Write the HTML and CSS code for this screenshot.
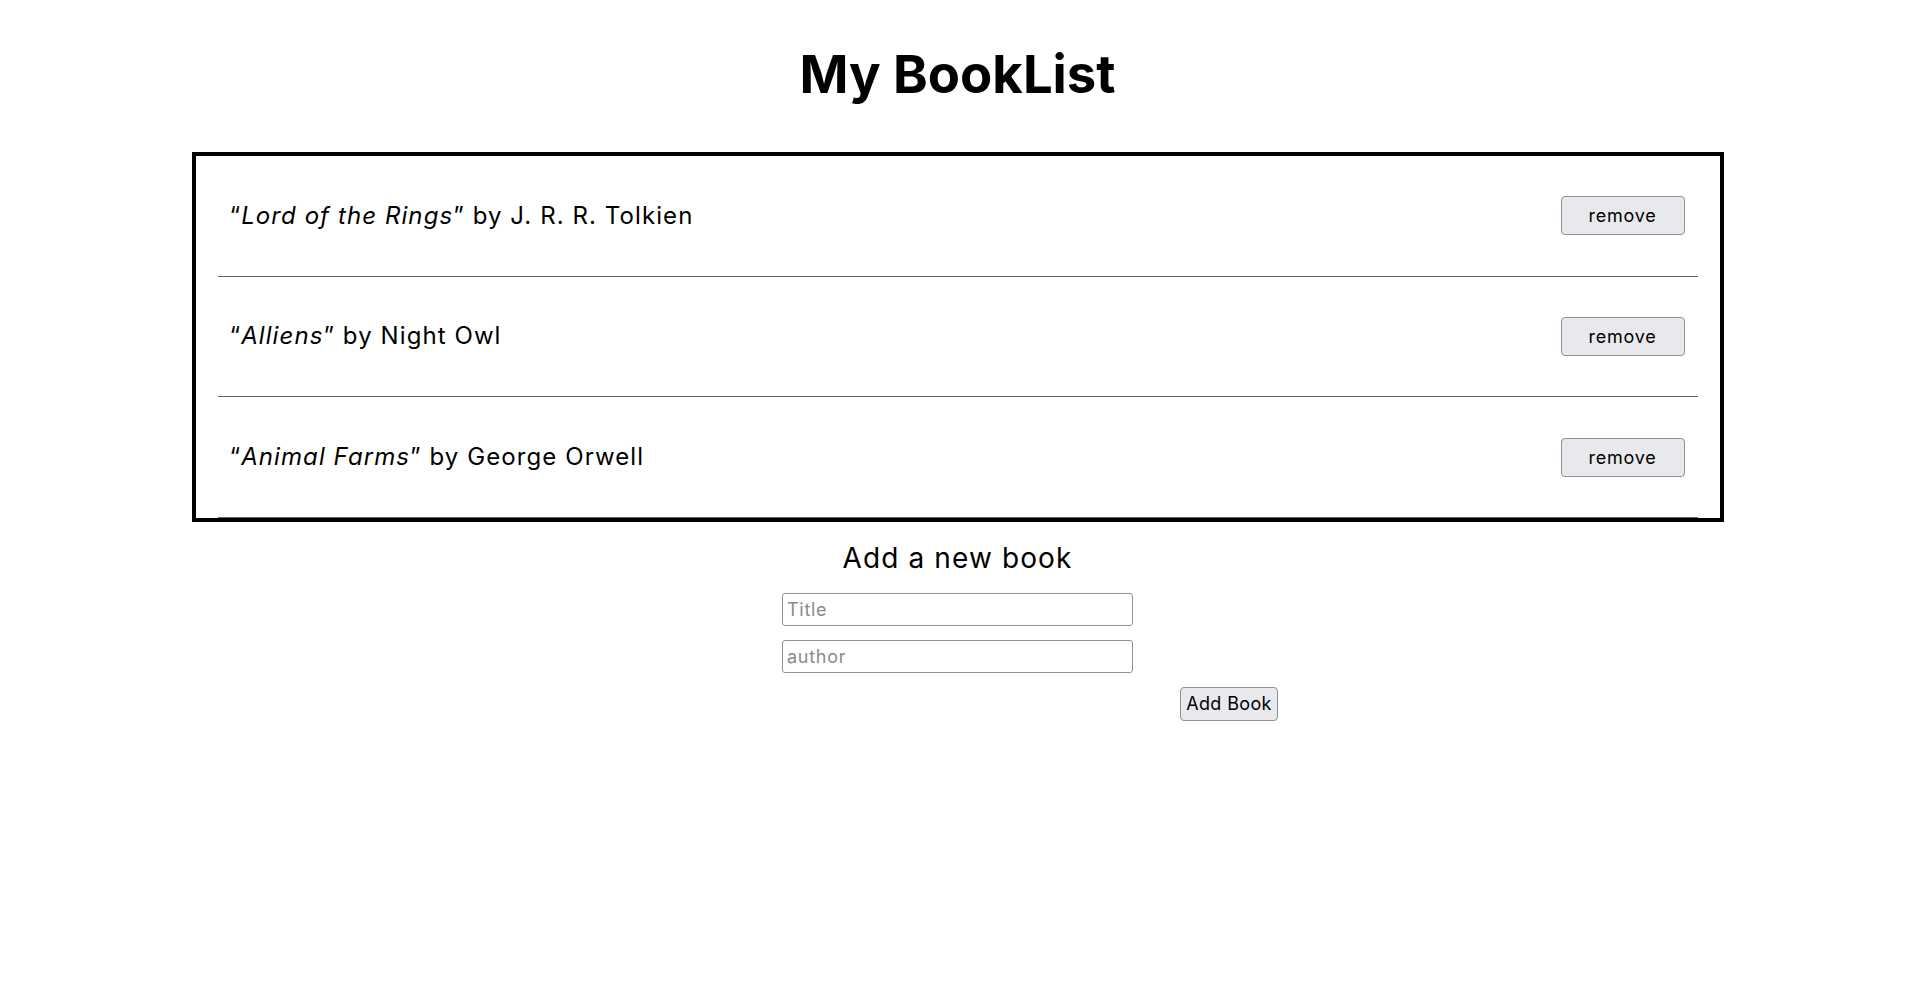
FILE: index.html
```html
<!DOCTYPE html>
<html lang="en">
<head>
<meta charset="utf-8">
<title>My BookList</title>
<link rel="stylesheet" href="styles.css">
</head>
<body>
<main class="page">
  <h1 class="page-title">My BookList</h1>
  <section class="book-box">
    <ul class="book-list">
      <li class="book-item"><span class="book-text">“<em>Lord of the Rings</em>” by J. R. R. Tolkien</span><button class="remove-btn" type="button">remove</button></li>
      <li class="book-item"><span class="book-text">“<em>Alliens</em>” by Night Owl</span><button class="remove-btn" type="button">remove</button></li>
      <li class="book-item"><span class="book-text">“<em>Animal Farms</em>” by George Orwell</span><button class="remove-btn" type="button">remove</button></li>
    </ul>
  </section>
  <section class="add-section">
    <h2 class="add-title">Add a new book</h2>
    <form class="add-form">
      <input class="add-input" type="text" placeholder="Title">
      <input class="add-input add-input-author" type="text" placeholder="author">
      <button class="add-btn" type="button">Add Book</button>
    </form>
  </section>
</main>
</body>
</html>
```
FILE: styles.css
```css
body {
  margin: 0;
  font-family: Inter, "Noto Sans", sans-serif;
  color: #000;
  background: #fff;
}

.page {
  width: 1915px;
}

.page-title {
  margin: 42px 0 0;
  font-size: 52.6px;
  line-height: 64px;
  font-weight: 700;
  text-align: center;
}

.book-box {
  box-sizing: border-box;
  width: 1532px;
  margin: 46px auto 0;
  border: 4px solid #000;
}

.book-list {
  list-style: none;
  margin: 0;
  padding: 0 22px;
}

.book-item {
  box-sizing: border-box;
  height: 120.67px;
  display: flex;
  justify-content: space-between;
  align-items: center;
  padding: 0 13px 0 12px;
  border-bottom: 1px solid #666;
}

.book-text {
  font-size: 24px;
  line-height: 30px;
  letter-spacing: 0.045em;
}

.book-text em {
  font-style: italic;
}

.remove-btn {
  width: 124px;
  height: 39px;
  padding: 0;
  font-family: inherit;
  font-size: 18px;
  letter-spacing: 0.04em;
  color: #000;
  background: #e9e9ed;
  border: 1px solid #8f8f9d;
  border-radius: 4px;
}

.add-title {
  margin: 19px 0 0;
  font-size: 28px;
  font-weight: 400;
  line-height: 34px;
  letter-spacing: 0.04em;
  text-align: center;
}

.add-form {
  display: flex;
  flex-direction: column;
  align-items: center;
  margin: 18px 0 0;
}

.add-input {
  box-sizing: border-box;
  width: 351px;
  height: 33px;
  padding: 0 4px;
  font-family: inherit;
  font-size: 18px;
  letter-spacing: 0.04em;
  color: #000;
  border: 1px solid #8f8f9d;
  border-radius: 3px;
  background: #fff;
}

.add-input::placeholder {
  color: #8a8a8a;
}

.add-input-author {
  margin-top: 14px;
}

.add-btn {
  margin: 14px 0 0 543px;
  width: 98px;
  height: 34px;
  padding: 0;
  font-family: inherit;
  font-size: 18px;
  letter-spacing: 0.02em;
  color: #000;
  background: #e9e9ed;
  border: 1px solid #8f8f9d;
  border-radius: 4px;
}
```
